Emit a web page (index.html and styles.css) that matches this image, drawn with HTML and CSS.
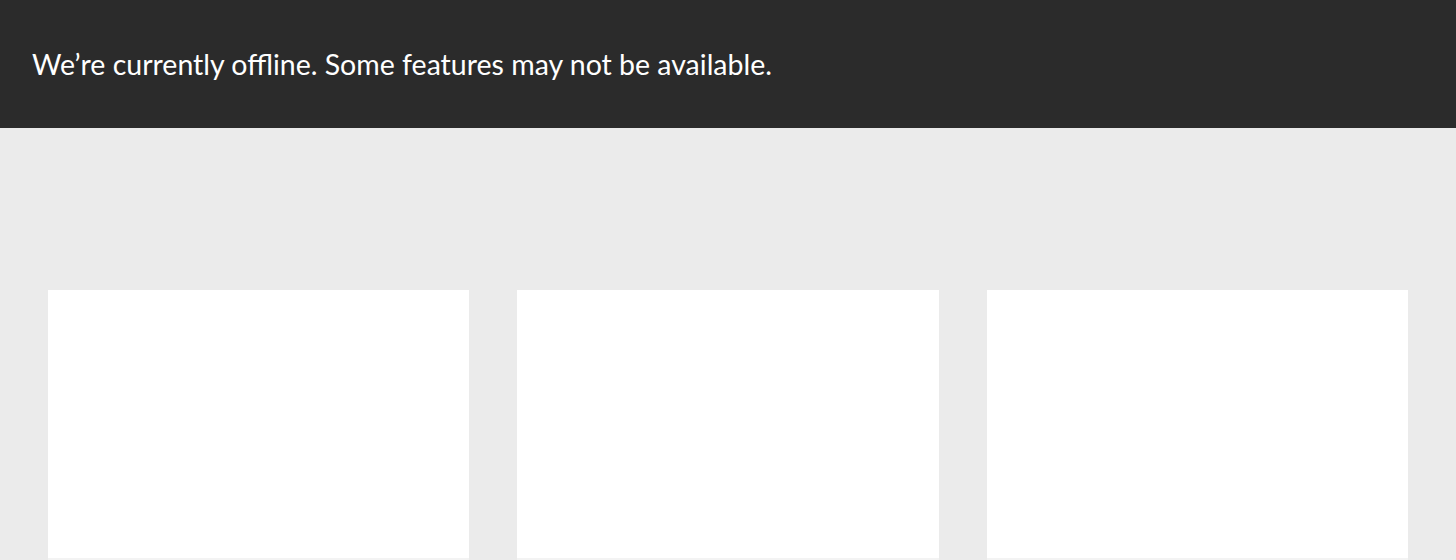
FILE: index.html
```html
<!DOCTYPE html>
<html lang="en">
<head>
<meta charset="utf-8">
<title>Offline</title>
<link rel="stylesheet" href="styles.css">
</head>
<body>
<header class="banner">
  <p class="banner-text">We’re currently offline. Some features may not be available.</p>
</header>
<main class="content">
  <div class="cards">
    <div class="card"></div>
    <div class="card"></div>
    <div class="card"></div>
  </div>
</main>
</body>
</html>
```

FILE: styles.css
```css
html, body {
  margin: 0;
  padding: 0;
  height: 100%;
}
body {
  background: #ebebeb;
  font-family: Lato, "Noto Sans", sans-serif;
  overflow: hidden;
}
.banner {
  background: #2b2b2b;
  height: 128px;
  display: flex;
  align-items: center;
  padding: 0 32px;
  box-sizing: border-box;
}
.banner-text {
  margin: 0;
  color: #ffffff;
  font-size: 28.5px;
  font-weight: 400;
  letter-spacing: 0;
}
.content {
  padding: 162px 48px 0;
}
.cards {
  display: grid;
  grid-template-columns: repeat(3, 1fr);
  gap: 48px;
}
.card {
  background: #ffffff;
  height: 268px;
  box-shadow: 0 2px 0 #f3f3f3;
}
```
